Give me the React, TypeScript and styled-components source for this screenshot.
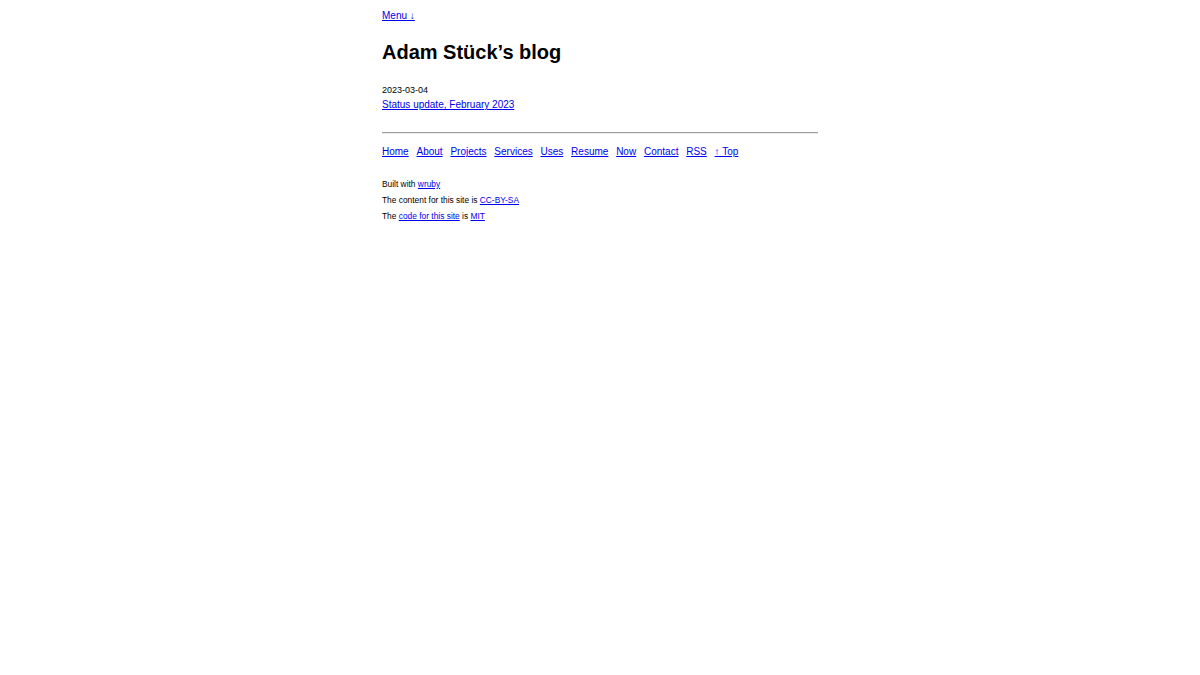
import React from "react";
import styled, { createGlobalStyle } from "styled-components";

const Global = createGlobalStyle`
  html, body { margin: 0; padding: 0; background: #fff; }
  body { font-family: "Liberation Sans", Arial, sans-serif; color: #000; }
  a { color: #0000ee; }
`;

const Page = styled.div`
  width: 436px;
  margin: 0 auto;
  padding-top: 10px;
  display: flex;
  flex-direction: column;
`;

const TopMenu = styled.div`
  font-size: 10px;
  line-height: 12px;
`;

const Title = styled.h1`
  font-size: 20px;
  line-height: 23px;
  font-weight: bold;
  margin: 19px 0 0;
`;

const PostList = styled.ul`
  list-style: none;
  padding: 0;
  margin: 21px 0 0;
`;

const PostItem = styled.li`
  display: flex;
  flex-direction: column;
  gap: 3px;
`;

const PostDate = styled.span`
  font-size: 9px;
  line-height: 11px;
`;

const PostLink = styled.a`
  font-size: 10px;
  line-height: 12px;
`;

const Rule = styled.hr`
  width: 100%;
  box-sizing: border-box;
  margin: 21px 0 0;
  border: 0;
  border-top: 1px solid #9a9a9a;
  border-bottom: 1px solid #eeeeee;
  height: 0;
`;

const Nav = styled.nav`
  display: flex;
  gap: 7.8px;
  font-size: 10px;
  line-height: 12px;
  margin-top: 12px;
`;

const Footer = styled.footer`
  margin-top: 18px;
  font-size: 8.4px;
  line-height: 16px;
`;

const FooterLine = styled.div``;

const navItems = ["Home", "About", "Projects", "Services", "Uses", "Resume", "Now", "Contact", "RSS", "↑ Top"];

export default function App() {
  return (
    <>
      <Global />
      <Page>
        <TopMenu>
          <a href="#menu">Menu ↓</a>
        </TopMenu>
        <Title>Adam Stück’s blog</Title>
        <PostList>
          <PostItem>
            <PostDate>2023-03-04</PostDate>
            <PostLink href="#post">Status update, February 2023</PostLink>
          </PostItem>
        </PostList>
        <Rule />
        <Nav id="menu">
          {navItems.map((n) => (
            <a key={n} href="#">{n}</a>
          ))}
        </Nav>
        <Footer>
          <FooterLine>
            Built with <a href="#">wruby</a>
          </FooterLine>
          <FooterLine>
            The content for this site is <a href="#">CC-BY-SA</a>
          </FooterLine>
          <FooterLine>
            The <a href="#">code for this site</a> is <a href="#">MIT</a>
          </FooterLine>
        </Footer>
      </Page>
    </>
  );
}
